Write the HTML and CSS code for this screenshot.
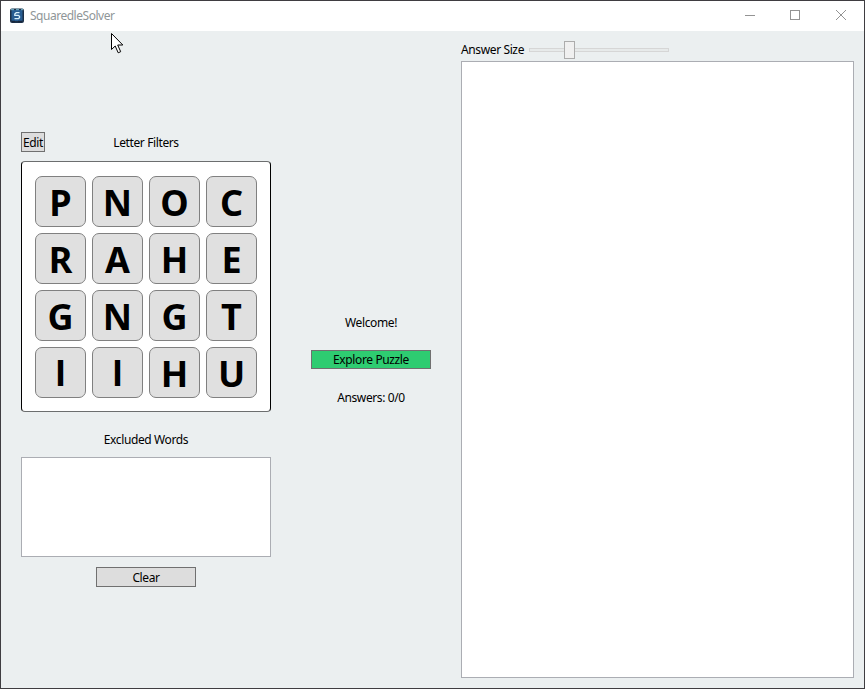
FILE: index.html
```html
<!DOCTYPE html>
<html lang="en">
<head>
<meta charset="utf-8">
<title>SquaredleSolver</title>
<link rel="stylesheet" href="styles.css">
</head>
<body>
<div class="window">
  <header class="titlebar">
    <svg class="app-icon" width="14" height="16" viewBox="0 0 14 16">
      <rect x="0" y="0.500" width="14" height="14.500" rx="2" fill="#1c3048"/>
      <rect x="1.500" y="2" width="11" height="11" rx="1" fill="#285d92"/>
      <path d="M1 1.500h3M6 1.500h3M11 1.500h2" stroke="#6aa2b8" stroke-width="1.400"/>
      <path d="M2 13.500h3M8 13.500h4" stroke="#17263c" stroke-width="1.500"/>
      <path d="M9.500 4.700H6.200L4.800 6v1.300h3.500l1.200 1v1.500l-1 .8H4.500" fill="none" stroke="#d8effa" stroke-width="1.300"/>
    </svg>
    <span class="title">SquaredleSolver</span>
    <svg class="controls" width="120" height="30" viewBox="0 0 120 30" fill="none" stroke="#939393">
      <path d="M5 14.500h10"/>
      <rect x="50.500" y="9.500" width="9" height="9"/>
      <path d="M96 9l10 10M106 9l-10 10"/>
    </svg>
  </header>
  <main class="content">
    <section class="left">
      <div class="filter-head">
        <button class="btn edit"><span class="t-edit">Edit</span></button>
        <span class="label t-filters">Letter Filters</span>
      </div>
      <div class="board">
        <div class="tile">P</div><div class="tile">N</div><div class="tile">O</div><div class="tile">C</div>
        <div class="tile">R</div><div class="tile">A</div><div class="tile">H</div><div class="tile">E</div>
        <div class="tile">G</div><div class="tile">N</div><div class="tile">G</div><div class="tile">T</div>
        <div class="tile plain">I</div><div class="tile plain">I</div><div class="tile">H</div><div class="tile">U</div>
      </div>
      <span class="label t-excluded">Excluded Words</span>
      <div class="box excluded"></div>
      <button class="btn clear"><span class="t-clear">Clear</span></button>
    </section>
    <section class="middle">
      <span class="label t-welcome">Welcome!</span>
      <button class="btn explore"><span class="t-explore">Explore Puzzle</span></button>
      <span class="label t-answers">Answers: 0/0</span>
    </section>
    <section class="right">
      <div class="size-row">
        <span class="label t-size">Answer Size</span>
        <div class="slider"><div class="thumb"></div></div>
      </div>
      <div class="box results"></div>
    </section>
  </main>
  <svg class="cursor" width="13" height="21" viewBox="0 0 13 21">
    <path d="M.5.5v16l3.700-3.500 3 6.800 2.500-1.100-3-6.700h5.100z" fill="#fff" stroke="#000"/>
  </svg>
</div>
</body>
</html>
```
FILE: styles.css
```css
* { box-sizing: border-box; }
body {
  margin: 0;
  font: 12px/16px "Noto Sans", "Open Sans", sans-serif;
  color: #000;
}
.window {
  position: relative;
  width: 865px;
  height: 689px;
  border: 1px solid #3f3d41;
  background: #ebeff0;
  display: flex;
  flex-direction: column;
  overflow: hidden;
}
.titlebar {
  height: 30px;
  flex: none;
  background: #fff;
  display: flex;
  align-items: center;
  padding-left: 9px;
}
.title {
  margin-left: 6px;
  color: #8f9698;
  letter-spacing: -0.48px;
}
.controls { margin-left: auto; margin-right: 4px; }
.content {
  flex: 1;
  display: grid;
  grid-template-columns: 250px 120px 393px;
  column-gap: 40px;
  padding-left: 20px;
}
.label { white-space: nowrap; line-height: 16px; }
.left {
  display: flex;
  flex-direction: column;
  align-items: center;
  padding-top: 101px;
}
.filter-head {
  width: 250px;
  height: 20px;
  display: grid;
  grid-template-columns: 24px 1fr 24px;
  align-items: center;
  justify-items: center;
}
.t-filters { padding-top: 2px; line-height: 16px; }
.btn {
  display: flex;
  align-items: center;
  justify-content: center;
  height: 20px;
  padding: 0;
  border: 1px solid #707070;
  border-radius: 0;
  background: #ddd;
  color: #000;
  font: inherit;
  white-space: nowrap;
}
.edit, .clear { padding-top: 2px; }
.edit { width: 24px; }
.board {
  width: 250px;
  height: 251px;
  margin-top: 9px;
  padding-top: 14px;
  border: 1px solid #000;
  border-top-color: #6c6e6f;
  border-bottom-color: #6c6e6f;
  border-radius: 4px;
  background: #fff;
  display: grid;
  grid-template-columns: repeat(4, 51px);
  grid-template-rows: repeat(4, 51px);
  gap: 6px;
  justify-content: center;
}
.tile {
  border: 1px solid #808080;
  border-radius: 7px;
  background: #e0e0e0;
  font-size: 36px;
  line-height: 51px;
  font-weight: 700;
  text-align: center;
}
.plain { font-family: Roboto, sans-serif; line-height: 52px; }
.t-excluded { margin-top: 20px; }
.box { background: #fff; border: 1px solid #abadb3; }
.excluded { width: 250px; height: 100px; margin-top: 9px; }
.clear { width: 100px; margin-top: 10px; }
.middle {
  display: flex;
  flex-direction: column;
  align-items: center;
  padding-top: 284px;
}
.explore { width: 120px; height: 19px; margin: 19px 0 21px; background: #2ecc71; }
.right { padding-top: 9px; margin-left: -10px; width: 393px; }
.size-row { height: 20px; margin-bottom: 1px; display: flex; align-items: center; }
.t-size { width: 68px; }
.slider {
  position: relative;
  width: 140px;
  height: 4px;
  border: 1px solid #d6d6d6;
  background: #e7eaea;
}
.thumb {
  position: absolute;
  left: 34px;
  top: -8px;
  width: 11px;
  height: 18px;
  border: 1px solid #acacac;
  background: #f0f0f0;
}
.results { height: 617px; }
.cursor { position: absolute; left: 110px; top: 32px; }
.t-filters, .t-excluded, .t-size, .t-clear, .t-edit, .t-explore, .t-welcome, .t-answers { letter-spacing: -0.38px; }
```
